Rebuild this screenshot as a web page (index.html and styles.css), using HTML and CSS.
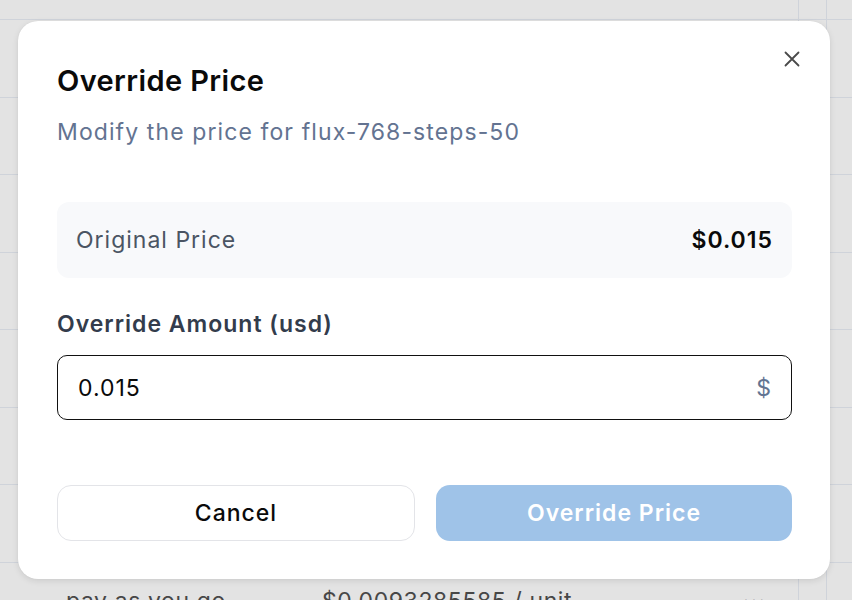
FILE: index.html
```html
<!DOCTYPE html>
<html lang="en">
<head>
<meta charset="utf-8">
<title>Override Price</title>
<link rel="stylesheet" href="styles.css">
</head>
<body>
<div class="page">
  <div class="table">
    <div class="row"></div>
    <div class="row"></div>
    <div class="row"></div>
    <div class="row"></div>
    <div class="row"></div>
    <div class="row"></div>
    <div class="row"></div>
    <div class="row last">
      <span class="c1">pay as you go</span>
      <span class="c2">$0.0093285585 / unit</span>
      <span class="c3">•••</span>
    </div>
  </div>
  <div class="vline v1"></div>
  <div class="vline v2"></div>
</div>

<div class="modal">
  <button class="close" aria-label="Close">
    <svg width="16" height="16" viewBox="0 0 16 16"><path d="M1.5 1.5 L14.5 14.5 M14.5 1.5 L1.5 14.5" stroke="#4a4a4a" stroke-width="1.8" stroke-linecap="round" fill="none"/></svg>
  </button>
  <h2 class="title">Override Price</h2>
  <p class="subtitle">Modify the price for flux-768-steps-50</p>
  <div class="orig">
    <span class="orig-label">Original Price</span>
    <span class="orig-value">$0.015</span>
  </div>
  <label class="field-label">Override Amount (usd)</label>
  <div class="input">
    <span class="input-value">0.015</span>
    <span class="input-suffix">$</span>
  </div>
  <div class="actions">
    <button class="btn cancel">Cancel</button>
    <button class="btn primary">Override Price</button>
  </div>
</div>
</body>
</html>
```
FILE: styles.css
```css
html, body {
  margin: 0;
  padding: 0;
}
body {
  width: 852px;
  height: 600px;
  overflow: hidden;
  background: #e3e3e3;
  font-family: Inter, "Noto Sans", sans-serif;
  position: relative;
}
.page {
  position: relative;
  width: 852px;
  height: 600px;
  overflow: hidden;
}
.table {
  padding-top: 19px;
  height: 600px;
  box-sizing: border-box;
  overflow: hidden;
}
.row {
  height: 77.5px;
  border-top: 1px solid #cfd3da;
  box-sizing: border-box;
}
.row.last {
  display: flex;
  align-items: flex-start;
  font-size: 23px;
  line-height: 28px;
  letter-spacing: 0.6px;
  color: #474747;
  padding-top: 24px;
}
.c1 { margin-left: 66px; width: 256px; }
.c2 { width: 420px; }
.c3 { font-size: 14px; letter-spacing: 0; }
.vline {
  position: absolute;
  top: 0;
  width: 1px;
  height: 600px;
  background: #cfd3da;
}
.v1 { left: 798px; }
.v2 { left: 826px; }

.modal {
  position: absolute;
  left: 18px;
  top: 21px;
  width: 812px;
  height: 558px;
  box-sizing: border-box;
  background: #fff;
  border-radius: 20px;
  box-shadow: 0 2px 6px rgba(0,0,0,0.10), 0 0 1px rgba(0,0,0,0.08);
  padding: 43px 38px 38px 39px;
  display: flex;
  flex-direction: column;
}
.close {
  position: absolute;
  right: 30px;
  top: 30px;
  background: none;
  border: 0;
  padding: 0;
  width: 16px;
  height: 16px;
  display: flex;
}
.title {
  margin: 0;
  font-size: 29px;
  line-height: 34px;
  font-weight: 600;
  color: #0a0a0a;
  letter-spacing: 0.4px;
}
.subtitle {
  margin: 20px 0 0;
  font-size: 23px;
  line-height: 28px;
  letter-spacing: 1.1px;
  color: #637391;
}
.orig {
  margin-top: 56px;
  height: 76px;
  flex: none;
  background: #f8f9fb;
  border-radius: 12px;
  display: flex;
  align-items: center;
  justify-content: space-between;
  padding: 0 19px;
}
.orig-label {
  font-size: 23px;
  letter-spacing: 1px;
  color: #4b5563;
}
.orig-value {
  font-size: 23px;
  letter-spacing: 1px;
  font-weight: 600;
  color: #0a0a0a;
}
.field-label {
  margin-top: 32px;
  font-size: 23px;
  line-height: 28px;
  letter-spacing: 1px;
  font-weight: 600;
  color: #333c4c;
}
.input {
  margin-top: 17px;
  height: 65px;
  flex: none;
  box-sizing: border-box;
  border: 1.5px solid #111;
  border-radius: 10px;
  display: flex;
  align-items: center;
  justify-content: space-between;
  padding: 0 20px 0 20px;
}
.input-value {
  font-size: 23px;
  letter-spacing: 1px;
  color: #0a0a0a;
}
.input-suffix {
  font-size: 23px;
  color: #627492;
}
.actions {
  margin-top: 65px;
  display: flex;
  gap: 21px;
}
.btn {
  flex: 1;
  height: 56px;
  border-radius: 14px;
  font-family: Inter, "Noto Sans", sans-serif;
  font-size: 23px;
  letter-spacing: 1px;
  font-weight: 500;
}
.cancel {
  background: #fff;
  border: 1px solid #e3e4e8;
  color: #0a0a0a;
}
.primary {
  background: #9fc3e8;
  border: 0;
  color: #fff;
  font-weight: 600;
}
```
